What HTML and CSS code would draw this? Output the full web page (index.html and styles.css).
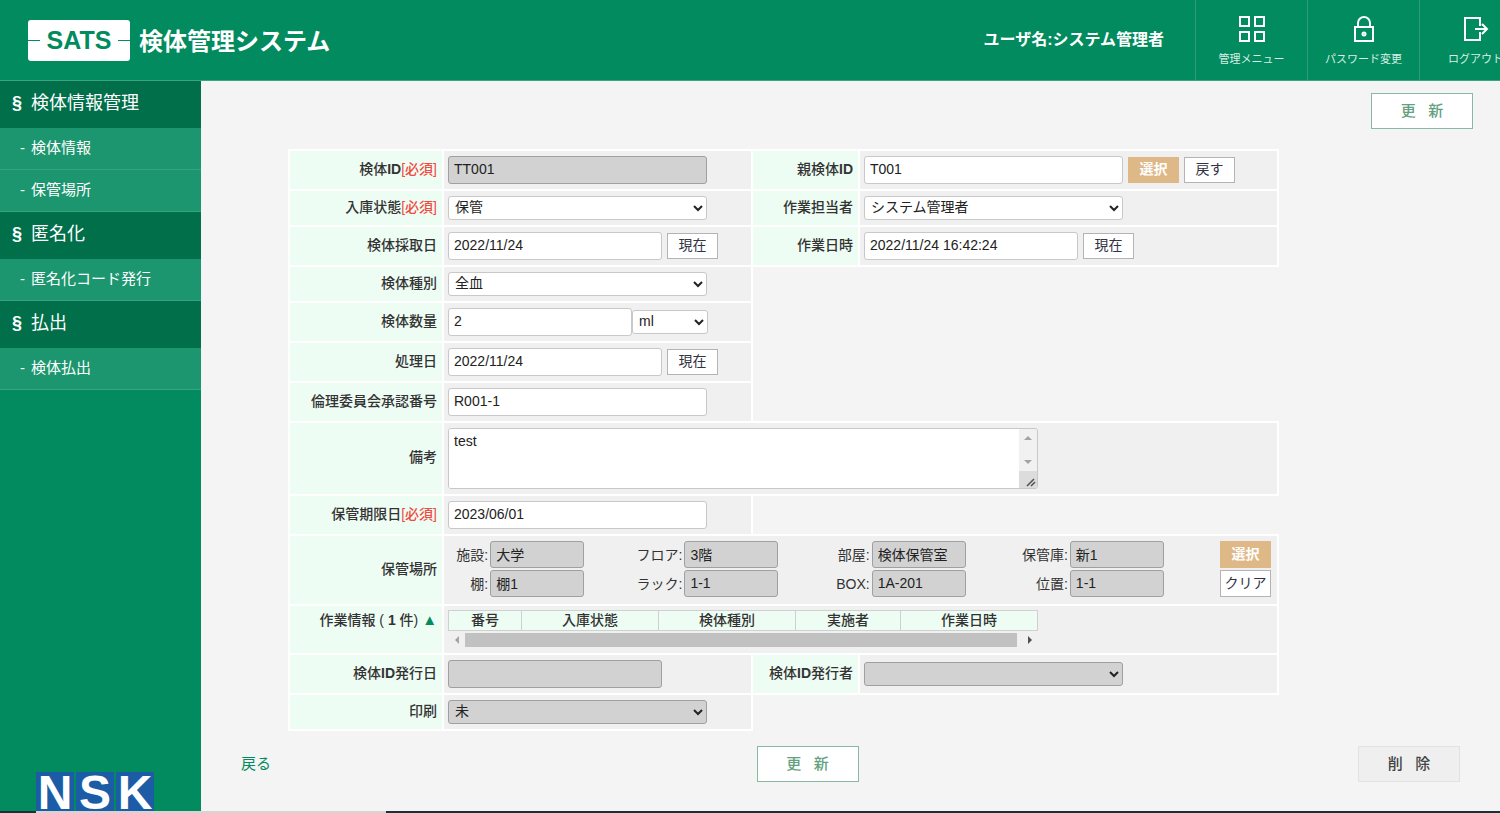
FILE: index.html
```html
<!DOCTYPE html>
<html lang="ja">
<head>
<meta charset="utf-8">
<title>検体管理システム</title>
<link rel="stylesheet" href="styles.css">
</head>
<body>
<header class="header">
  <div class="brand">
    <div class="logo"><span class="logo-text">SATS</span></div>
    <h1 class="title">検体管理システム</h1>
  </div>
  <div class="user">ユーザ名:システム管理者</div>
  <nav class="tools">
    <a class="tool" href="#">
      <svg width="28" height="28" viewBox="0 0 28 28" fill="none" stroke="currentColor" stroke-width="2"><path d="M2 2h9v9H2zM17 2h9v9h-9zM2 17h9v9H2zM17 17h9v9h-9z"/></svg>
      管理メニュー
    </a>
    <a class="tool" href="#">
      <svg width="28" height="28" viewBox="0 0 28 28" fill="none" stroke="currentColor" stroke-width="2"><path d="M5 12h18v14H5zM8 12V8a6 6 0 0 1 12 0v4"/><circle cx="14" cy="19" r="1.5"/></svg>
      パスワード変更
    </a>
    <a class="tool" href="#">
      <svg width="28" height="28" viewBox="0 0 28 28" fill="none" stroke="currentColor" stroke-width="2"><path d="M18 11V3H3v22h15v-8M13 14h12M20 9l5 5-5 5"/></svg>
      ログアウト
    </a>
  </nav>
</header>

<div class="body">
  <aside class="sidebar">
    <nav>
      <h2 class="side-head"><span class="mark">§</span>検体情報管理</h2>
      <a class="side-item" href="#"><span class="dash">-</span>検体情報</a>
      <a class="side-item" href="#"><span class="dash">-</span>保管場所</a>
      <h2 class="side-head"><span class="mark">§</span>匿名化</h2>
      <a class="side-item" href="#"><span class="dash">-</span>匿名化コード発行</a>
      <h2 class="side-head"><span class="mark">§</span>払出</h2>
      <a class="side-item" href="#"><span class="dash">-</span>検体払出</a>
    </nav>
    <div class="nsk"><span>N</span><span>S</span><span>K</span></div>
  </aside>

  <main class="main">
    <div class="top-actions"><button class="btn-main" type="button">更&nbsp; &nbsp;新</button></div>

    <table class="form">
      <colgroup><col class="c1"><col class="c2"><col class="c3"><col></colgroup>
      <tr>
        <th><label for="sid">検体<b>ID</b><em>[必須]</em></label></th>
        <td><input id="sid" class="w-full off" value="TT001" readonly></td>
        <th><label for="pid">親検体<b>ID</b></label></th>
        <td><div class="line"><input id="pid" class="w-full" value="T001"><button class="btn tan" type="button">選択</button><button class="btn" type="button">戻す</button></div></td>
      </tr>
      <tr>
        <th><label for="state">入庫状態<em>[必須]</em></label></th>
        <td><select id="state" class="w-full"><option>保管</option></select></td>
        <th><label for="worker">作業担当者</label></th>
        <td><select id="worker" class="w-full"><option>システム管理者</option></select></td>
      </tr>
      <tr>
        <th><label for="taken">検体採取日</label></th>
        <td><div class="line"><input id="taken" class="w-date" value="2022/11/24"><button class="btn" type="button">現在</button></div></td>
        <th><label for="wtime">作業日時</label></th>
        <td><div class="line"><input id="wtime" class="w-date" value="2022/11/24 16:42:24"><button class="btn" type="button">現在</button></div></td>
      </tr>
      <tr>
        <th><label for="kind">検体種別</label></th>
        <td><select id="kind" class="w-full"><option>全血</option></select></td>
        <td class="blank" colspan="2" rowspan="4"></td>
      </tr>
      <tr>
        <th><label for="amount">検体数量</label></th>
        <td><div class="line tight"><input id="amount" class="w-amount" value="2"><select class="w-unit" aria-label="単位"><option>ml</option></select></div></td>
      </tr>
      <tr>
        <th><label for="proc">処理日</label></th>
        <td><div class="line"><input id="proc" class="w-date" value="2022/11/24"><button class="btn" type="button">現在</button></div></td>
      </tr>
      <tr>
        <th><label for="ethics">倫理委員会承認番号</label></th>
        <td><input id="ethics" class="w-full" value="R001-1"></td>
      </tr>
      <tr>
        <th><label for="note">備考</label></th>
        <td colspan="3">
          <div class="note">
            <textarea id="note">test</textarea>
            <svg width="18" height="59" viewBox="0 0 18 59"><path fill="#f1f1f1" d="M0 0h18v59H0z"/><path fill="#dcdcdc" d="M0 42h18v17H0z"/><path fill="#a3a3a3" d="M5 11l4-4 4 4zM5 31l4 4 4-4z"/><path stroke="#505050" stroke-width="1.500" d="M8 57l7-7M12 57l4-4"/></svg>
          </div>
        </td>
      </tr>
      <tr>
        <th><label for="limit">保管期限日<em>[必須]</em></label></th>
        <td><input id="limit" class="w-full" value="2023/06/01"></td>
        <td class="blank" colspan="2"></td>
      </tr>
      <tr>
        <th>保管場所</th>
        <td colspan="3">
          <div class="places">
            <label>施設: <input value="大学" readonly></label>
            <label>フロア: <input value="3階" readonly></label>
            <label>部屋: <input value="検体保管室" readonly></label>
            <label>保管庫: <input value="新1" readonly></label>
            <button class="btn tan" type="button">選択</button>
            <label>棚: <input value="棚1" readonly></label>
            <label>ラック: <input value="1-1" readonly></label>
            <label>BOX: <input value="1A-201" readonly></label>
            <label>位置: <input value="1-1" readonly></label>
            <button class="btn" type="button">クリア</button>
          </div>
        </td>
      </tr>
      <tr>
        <th class="top">作業情報 ( <b>1</b> 件) <span class="tri">▲</span></th>
        <td colspan="3" class="top">
          <div class="work">
            <table class="history">
              <colgroup><col class="h1"><col class="h2"><col class="h2"><col class="h3"><col></colgroup>
              <tr><th>番号</th><th>入庫状態</th><th>検体種別</th><th>実施者</th><th>作業日時</th></tr>
            </table>
            <div class="scroll">
              <svg width="17" height="14" viewBox="0 0 17 14"><path fill="#a3a3a3" d="M11 3v8L7 7z"/></svg>
              <div class="thumb"></div>
              <svg width="21" height="14" viewBox="0 0 21 14"><path fill="#505050" d="M11 3v8l4-4z"/></svg>
            </div>
          </div>
        </td>
      </tr>
      <tr>
        <th><label for="idate">検体<b>ID</b>発行日</label></th>
        <td><input id="idate" class="w-date off" readonly></td>
        <th><label for="iuser">検体<b>ID</b>発行者</label></th>
        <td><select id="iuser" class="w-full off"><option></option></select></td>
      </tr>
      <tr>
        <th><label for="print">印刷</label></th>
        <td><select id="print" class="w-full off"><option>未</option></select></td>
        <td class="blank last" colspan="2"></td>
      </tr>
    </table>

    <div class="bottom-actions">
      <a class="back" href="#">戻る</a>
      <button class="btn-main" type="button">更&nbsp; &nbsp;新</button>
      <button class="btn-main delete" type="button">削&nbsp; &nbsp;除</button>
    </div>
  </main>
</div>
<footer class="edge"><span></span></footer>
</body>
</html>
```
FILE: styles.css
```css
* { box-sizing: border-box; }

body {
  margin: 0;
  min-height: 100vh;
  display: flex;
  flex-direction: column;
  overflow-x: hidden;
  background: #f4f4f4;
  color: #333;
  font: 14px/20px "Liberation Sans", "Noto Sans CJK JP", sans-serif;
}

a { text-decoration: none; }

/* header */
.header {
  display: flex;
  align-items: stretch;
  width: calc(100% + 31px);
  height: 81px;
  background: #028b5e;
  border-bottom: 1px solid #3ba37f;
  color: #fff;
}
.brand {
  display: flex;
  align-items: center;
  gap: 9px;
  margin-right: auto;
  padding-left: 28px;
}
.logo {
  display: flex;
  align-items: center;
  justify-content: space-between;
  width: 102px;
  height: 41px;
  border-radius: 3px;
  background: #fff;
  color: #028b5e;
}
.logo::before,
.logo::after {
  content: "";
  width: 12px;
  height: 1px;
  background: #028b5e;
}
.logo-text {
  font-size: 25px;
  line-height: 41px;
  font-weight: 700;
}
.title {
  margin: 0;
  padding-top: 3px;
  font-size: 24px;
  line-height: 36px;
  font-weight: 700;
}
.user {
  align-self: center;
  margin-right: 31px;
  font-size: 16px;
  font-weight: 700;
}
.tools { display: flex; }
.tool {
  display: flex;
  flex-direction: column;
  align-items: center;
  gap: 6px;
  width: 112px;
  padding-top: 15px;
  border-left: 1px solid #2b9d77;
  color: #d9eee6;
  font-size: 11px;
  line-height: 20px;
}
.tool svg { color: #fff; }

/* sidebar */
.body {
  display: flex;
  flex: 1;
}
.sidebar {
  display: flex;
  flex: none;
  flex-direction: column;
  justify-content: space-between;
  width: 201px;
  background: #028b5e;
}
.side-head {
  display: flex;
  gap: 7px;
  margin: 0;
  padding: 9px 12px 12px;
  background: #006f4a;
  color: #fff;
  font-size: 18px;
  line-height: 26px;
  font-weight: 400;
}
.mark {
  width: 12px;
  font-weight: 700;
}
.side-item {
  display: flex;
  padding: 9px 20px 11px;
  border-bottom: 1px solid #35a380;
  background: #1c966e;
  color: #fff;
  font-size: 15px;
  line-height: 21px;
}
.dash { width: 11px; }
.nsk {
  display: flex;
  gap: 2px;
  padding-left: 36px;
}
.nsk span {
  width: 38px;
  height: 39px;
  background: #1c5ca6;
  color: #fff;
  font-size: 48px;
  line-height: 41px;
  font-weight: 700;
  text-align: center;
}

/* main area */
.main {
  flex: 1;
  min-width: 0;
}
.top-actions {
  display: flex;
  justify-content: flex-end;
  padding: 12px 27px 20px;
}
.btn-main {
  width: 102px;
  height: 36px;
  padding: 0;
  border: 1px solid #88b9a2;
  background: #fff;
  color: #639f80;
  font: 500 15px/20px "Liberation Sans", "Noto Sans CJK JP", sans-serif;
}
.btn-main.delete {
  justify-self: end;
  border-color: #e2e2e2;
  background: #efefef;
  color: #444;
}
.bottom-actions {
  display: grid;
  grid-template-columns: 6fr auto 7fr;
  align-items: center;
  padding: 15px 40px 29px;
}
.back {
  color: #028b5e;
  font-size: 15px;
}

/* specimen form */
.form {
  width: calc(100% - 308px);
  min-width: 900px;
  margin-left: 87px;
  border-collapse: collapse;
  table-layout: fixed;
}
.c1 { width: 154px; }
.c2 { width: 309px; }
.c3 { width: 107px; }
.form > tbody > tr > th,
.form > tbody > tr > td {
  padding: 5px 6px 5px 4px;
  border: 2px solid #fff;
}
.form > tbody > tr > th {
  padding: 3px 5px 6px 0;
  background: #eefdf4;
  font-weight: 500;
  text-align: right;
  white-space: nowrap;
}
.form > tbody > tr > td { background: #f0f0f0; }
.form > tbody > tr > td.blank {
  border-right: 0;
  background: #f4f4f4;
}
.form > tbody > tr > td.last { border-bottom: 0; }
.form > tbody > tr > .top {
  padding-top: 4px;
  vertical-align: top;
}
.form em {
  color: #f04b43;
  font-style: normal;
}
.tri {
  color: #028b5e;
  font-size: 15px;
}

input,
select {
  display: block;
  margin: 0;
  border: 1px solid #c8c8c8;
  border-radius: 3px;
  background: #fff;
  color: #222;
  font: 14px/20px "Liberation Sans", "Noto Sans CJK JP", sans-serif;
}
input {
  height: 28px;
  padding: 0 5px 2px;
}
select {
  height: 24px;
  padding: 0 2px 2px;
}
.off,
.places input {
  border-color: #a0a0a0;
  background-color: #d2d2d2;
}
.w-full { width: 259px; }
.w-date { width: 214px; }
.w-amount { width: 184px; }
.w-unit { width: 76px; }
.line {
  display: flex;
  align-items: center;
  gap: 5px;
}
.line.tight { gap: 0; }
.btn {
  width: 51px;
  height: 26px;
  padding: 0 0 2px;
  border: 1px solid #b4b4b4;
  background: #fff;
  color: #334;
  font: 14px/20px "Liberation Sans", "Noto Sans CJK JP", sans-serif;
}
.btn.tan {
  border-color: #deb887;
  background: #deb887;
  color: #fff;
  font-weight: 700;
}
.note {
  display: flex;
  width: 590px;
  border: 1px solid #c8c8c8;
  border-radius: 3px;
  overflow: hidden;
}
.note textarea {
  flex: 1;
  height: 59px;
  padding: 2px 5px;
  border: 0;
  background: #fff;
  color: #222;
  font: 14px/20px "Liberation Sans", "Noto Sans CJK JP", sans-serif;
  resize: none;
  overflow: hidden;
}
.places {
  display: grid;
  grid-template-columns: 136fr 194fr 187fr 198fr 107fr;
  justify-items: end;
  gap: 2px 0;
  padding-bottom: 2px;
}
.places label {
  display: flex;
  align-items: center;
  gap: 2px;
}
.places input {
  width: 94px;
  height: 27px;
}
.places .btn { height: 27px; }

/* history list */
.work { width: 590px; }
.history {
  width: 100%;
  border-collapse: collapse;
  table-layout: fixed;
}
.h1 { width: 73px; }
.h2 { width: 137px; }
.h3 { width: 105px; }
.history th {
  height: 20px;
  padding: 0;
  border: 1px solid #d0d0d0;
  background: #eefdf4;
  font-weight: 500;
  line-height: 19px;
}
.scroll {
  display: flex;
  padding: 2px 0 1px;
}
.thumb {
  flex: 1;
  height: 14px;
  background: #c1c1c1;
}

/* window edge */
.edge {
  height: 2px;
  padding-left: 36px;
  background: #1d3035;
}
.edge span {
  display: block;
  width: 350px;
  height: 2px;
  background: #d4d4d4;
}
```
